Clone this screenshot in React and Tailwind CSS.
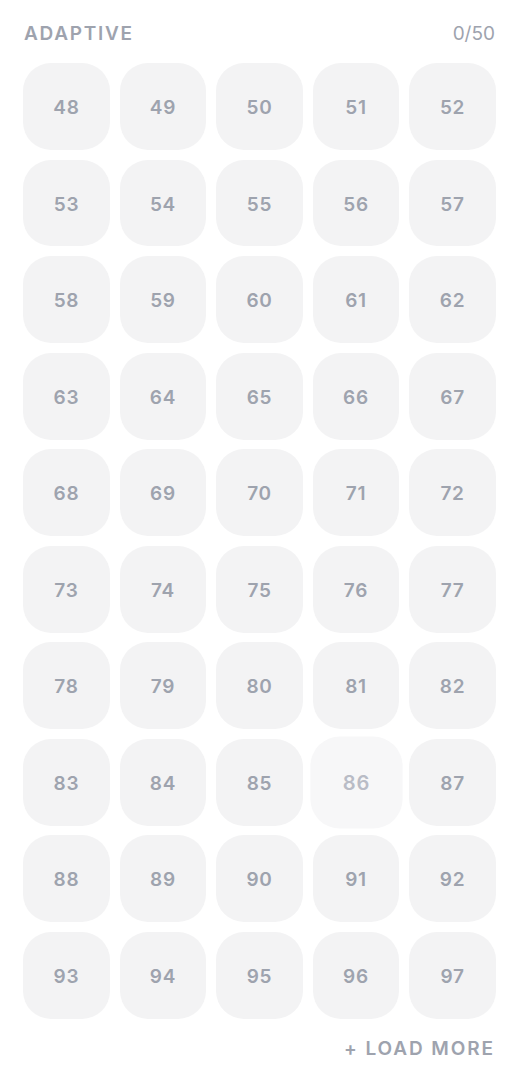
import React from "react";

export default function App() {
  const nums = Array.from({ length: 50 }, (_, i) => 48 + i);
  return (
    <div
      className="w-[518px] min-h-[1082px] bg-white pl-[23px] pr-[22px] pt-[22px]"
      style={{ fontFamily: "Inter, 'Noto Sans', sans-serif" }}
    >
      <div className="flex items-center justify-between pl-px pr-px pt-px">
        <span className="text-[19px] leading-[22px] font-semibold tracking-[0.09em] text-[#9ea3ae]">
          ADAPTIVE
        </span>
        <span className="text-[19px] leading-[22px] text-[#9ea3ae]">0/50</span>
      </div>
      <div className="mt-[18px] grid grid-cols-5 gap-[9.6px]">
        {nums.map((n) => (
          <div
            key={n}
            className={
              n === 86
                ? "aspect-square rounded-[28px] bg-[#f7f7f8] flex items-center justify-center scale-[1.06]"
                : "aspect-square rounded-[28px] bg-[#f3f3f4] flex items-center justify-center"
            }
          >
            <span
              className={
                n === 86
                  ? "translate-y-[2px] text-[19px] font-semibold tracking-[0.04em] text-[#b9bcc6]"
                  : "translate-y-[2px] text-[19px] font-semibold tracking-[0.04em] text-[#9ea3ae]"
              }
            >
              {n}
            </span>
          </div>
        ))}
      </div>
      <div className="mt-[19px] flex justify-end pr-px">
        <span className="text-[19px] leading-[22px] font-semibold tracking-[0.1em] text-[#9ea3ae]">
          + LOAD MORE
        </span>
      </div>
    </div>
  );
}
